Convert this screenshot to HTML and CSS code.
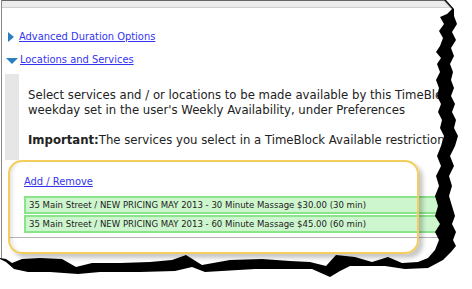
FILE: index.html
```html
<!DOCTYPE html>
<html>

<head>
    <link rel="stylesheet" href="styles.css">
</head>

<body>
    <div class="page">
        <div class="topbar"></div>
        <div class="toggle first">
            <span class="arrow-right"></span><a href="#">Advanced Duration Options</a>
        </div>
        <div class="toggle">
            <span class="arrow-down"></span><a href="#">Locations and Services</a>
        </div>
        <div class="panel">
            <p>Select services and / or locations to be made available by this TimeBlock<br>weekday set in the user's Weekly Availability, under Preferences</p>
            <p><b>Important:</b>The services you select in a TimeBlock Available restriction</p>
        </div>
        <div class="picked">
            <a href="#">Add / Remove</a>
            <div class="item">35 Main Street / NEW PRICING MAY 2013 - 30 Minute Massage $30.00 (30 min)</div>
            <div class="item">35 Main Street / NEW PRICING MAY 2013 - 60 Minute Massage $45.00 (60 min)</div>
            <div class="rule"></div>
            <div class="frame"></div>
        </div>
    </div>

    <!-- torn paper edge -->
    <svg class="torn" width="472" height="289" viewBox="0 0 472 289">
        <path fill="#000" d="M444,0 L452,9 L447,14 L440,17 L444,24 L439,31 L443,38 L440,46 L436,52 L441,58 L437,64 L440,72 L436,80 L439,88 L437,96 L441,104 L438,112 L442,120 L440,128 L444,136 L441,146 L437,156 L441,166 L436,176 L439,186 L435,196 L438,206 L435,216 L440,224 L435,232 L439,240 L435,250 L428,258 L418,262 L402,263 L388,257 L372,262 L355,257 L336,255 L326,266 L310,262 L290,261 L262,259 L230,260 L202,265 L186,255 L172,260 L150,262 L120,263 L92,263 L76,267 L62,259 L40,258 L22,259 L12,263 L6,259 L0,258 L0,289 L472,289 L472,0 Z" />
        <path fill="#fff" d="M446,0 L454,9 L454,16 L457,24 L452,32 L456,40 L451,48 L454,56 L450,64 L453,72 L451,80 L454,88 L451,96 L455,104 L452,112 L456,120 L454,128 L458,136 L455,146 L450,156 L454,166 L449,176 L452,186 L449,196 L452,206 L455,216 L452,224 L456,232 L453,240 L456,246 L451,252 L443,260 L428,268 L405,269 L385,266 L350,266 L340,271 L330,277 L312,269 L285,269 L255,269 L205,272 L192,267 L175,271 L140,272 L100,272 L78,274 L50,272 L28,272 L14,269 L6,262 L0,259 L0,289 L472,289 L472,0 Z" />
        <path fill="none" stroke="#888" stroke-width="1" d="M444,0.5 L452,9" />
    </svg>
</body>

</html>
```

FILE: styles.css
```css
body {
    margin: 0;
    background-color: #fff;
    font-family: "DejaVu Sans Condensed", "DejaVu Sans", sans-serif;
    font-stretch: condensed;
    color: #222;
    overflow: hidden;
    height: 289px;
}

a {
    color: #3434ee;
}

.page {
    margin-left: 1px;
    border-left: 1px solid #888;
    height: 258px;
}

.topbar {
    height: 6px;
    background-color: #ececec;
    border-top: 1px solid #666;
    border-bottom: 1px solid #cfcfcf;
}

.toggle {
    display: flex;
    align-items: center;
    height: 14px;
    line-height: 14px;
    font-size: 11px;
    margin-top: 9px;
}

.toggle.first {
    margin-top: 22px;
}

.arrow-right {
    width: 0;
    height: 0;
    margin-left: 6px;
    margin-right: 5px;
    border-top: 5px solid transparent;
    border-bottom: 5px solid transparent;
    border-left: 6px solid #2b7fc0;
}

.arrow-down {
    width: 0;
    height: 0;
    margin-left: 4px;
    margin-right: 2px;
    margin-top: 2px;
    border-left: 6px solid transparent;
    border-right: 6px solid transparent;
    border-top: 6px solid #2b7fc0;
}

.panel {
    margin-top: 7px;
    margin-left: 3px;
    border-left: 14px solid #e6e6e6;
    padding: 13px 0 13px 9px;
    font-size: 13px;
    line-height: 15px;
    white-space: nowrap;
}

.panel p {
    margin: 0 0 15px 0;
}

.panel p:last-child {
    margin-bottom: 0;
}

.picked {
    position: relative;
    padding-top: 15px;
    padding-left: 22px;
    height: 83px;
    font-size: 11px;
    line-height: 14px;
}

.picked a {
    display: block;
    margin-bottom: 7px;
}

.item {
    height: 14px;
    line-height: 14px;
    margin-bottom: 1px;
    padding-left: 3px;
    font-size: 9.5px;
    white-space: nowrap;
    background-color: #cef6ce;
    border: 2px solid #8ae48a;
}

.rule {
    margin-top: 4px;
    margin-left: -14px;
    border-top: 1px solid #b4b4b4;
}

.frame {
    position: absolute;
    left: 6px;
    top: 0;
    width: 411px;
    height: 94px;
    box-sizing: border-box;
    border: 2px solid #f5cd5c;
    border-radius: 14px;
    box-shadow: 4px 4px 4px rgba(0, 0, 0, 0.22), inset 5px 0 4px -3px rgba(0, 0, 0, 0.12);
}

.torn {
    position: absolute;
    top: 0;
    left: 0;
}
```
